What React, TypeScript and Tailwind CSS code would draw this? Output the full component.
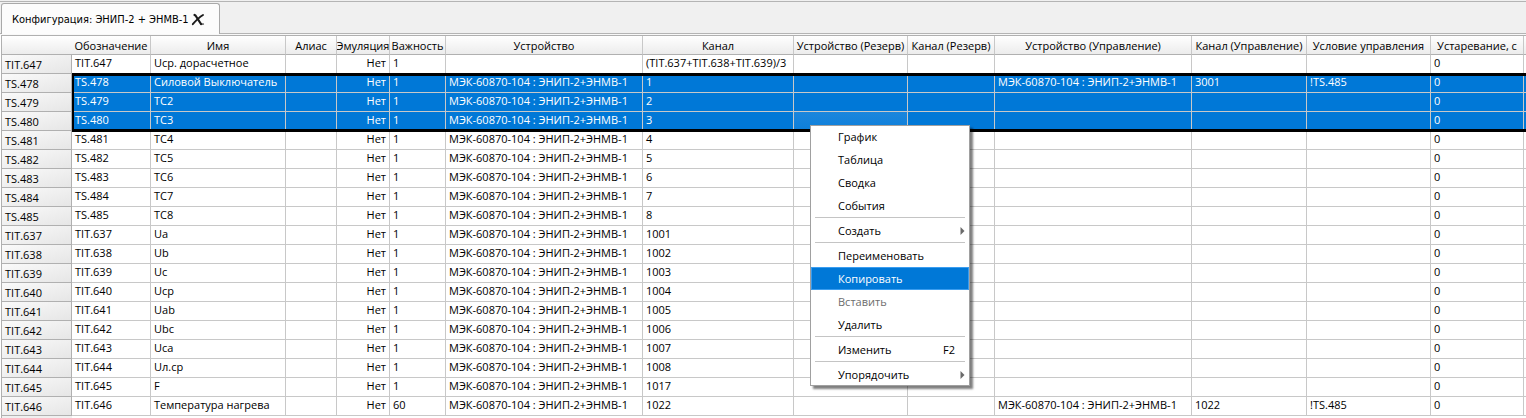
import React from "react";

const ROW = 19;
const SELECTED = { first: 1, count: 3 };
const CURRENT = { row: 3, column: 7 };

type Column = { title: string; width: string };

const columns: Column[] = [
  { title: "Обозначение", width: "w-[79px]" },
  { title: "Имя", width: "w-[135px]" },
  { title: "Алиас", width: "w-[51px]" },
  { title: "Эмуляция", width: "w-[53px]" },
  { title: "Важность", width: "w-[56px]" },
  { title: "Устройство", width: "w-[197px]" },
  { title: "Канал", width: "w-[151px]" },
  { title: "Устройство (Резерв)", width: "w-[114px]" },
  { title: "Канал (Резерв)", width: "w-[87px]" },
  { title: "Устройство (Управление)", width: "w-[197px]" },
  { title: "Канал (Управление)", width: "w-[115px]" },
  { title: "Условие управления", width: "w-[124px]" },
  { title: "Устаревание, с", width: "w-[93px]" },
];

const DEVICE = "МЭК-60870-104 : ЭНИП-2+ЭНМВ-1";

type Row = {
  id: string;
  name: string;
  channel: string;
  device?: string;
  priority?: string;
  controlDevice?: string;
  controlChannel?: string;
  condition?: string;
};

const rows: Row[] = [
  { id: "TIT.647", name: "Uср. дорасчетное", channel: "(TIT.637+TIT.638+TIT.639)/3", device: "" },
  { id: "TS.478", name: "Силовой Выключатель", channel: "1", controlDevice: DEVICE, controlChannel: "3001", condition: "!TS.485" },
  { id: "TS.479", name: "ТС2", channel: "2" },
  { id: "TS.480", name: "ТС3", channel: "3" },
  { id: "TS.481", name: "ТС4", channel: "4" },
  { id: "TS.482", name: "ТС5", channel: "5" },
  { id: "TS.483", name: "ТС6", channel: "6" },
  { id: "TS.484", name: "ТС7", channel: "7" },
  { id: "TS.485", name: "ТС8", channel: "8" },
  { id: "TIT.637", name: "Ua", channel: "1001" },
  { id: "TIT.638", name: "Ub", channel: "1002" },
  { id: "TIT.639", name: "Uc", channel: "1003" },
  { id: "TIT.640", name: "Uср", channel: "1004" },
  { id: "TIT.641", name: "Uab", channel: "1005" },
  { id: "TIT.642", name: "Ubc", channel: "1006" },
  { id: "TIT.643", name: "Uca", channel: "1007" },
  { id: "TIT.644", name: "Uл.ср", channel: "1008" },
  { id: "TIT.645", name: "F", channel: "1017" },
  { id: "TIT.646", name: "Температура нагрева", channel: "1022", priority: "60", controlDevice: DEVICE, controlChannel: "1022", condition: "!TS.485" },
];

function cellsOf(row: Row): string[] {
  return [
    row.id,
    row.name,
    "",
    "Нет",
    row.priority ?? "1",
    row.device ?? DEVICE,
    row.channel,
    "",
    "",
    row.controlDevice ?? "",
    row.controlChannel ?? "",
    row.condition ?? "",
    "0",
  ];
}

type MenuEntry = {
  label: string;
  submenu?: boolean;
  shortcut?: string;
  active?: boolean;
  disabled?: boolean;
};

const menuGroups: MenuEntry[][] = [
  [{ label: "График" }, { label: "Таблица" }, { label: "Сводка" }, { label: "События" }],
  [{ label: "Создать", submenu: true }],
  [
    { label: "Переименовать" },
    { label: "Копировать", active: true },
    { label: "Вставить", disabled: true },
    { label: "Удалить" },
  ],
  [{ label: "Изменить", shortcut: "F2" }],
  [{ label: "Упорядочить", submenu: true }],
];

function TabBar() {
  return (
    <div className="flex h-8 items-end border-b border-[#b4b4b4] bg-[#f0f0f0] pl-px">
      <div
        role="tab"
        aria-selected="true"
        className="-mb-px flex h-[31px] items-center rounded-t-[3px] border border-b-0 border-[#a9a9a9] bg-[#fcfcfc] pt-0.5 pr-3.5 pl-2.5 font-['DejaVu_Sans_Condensed','DejaVu_Sans',sans-serif] text-[11px] leading-4 text-black"
      >
        <span className="whitespace-nowrap">Конфигурация: ЭНИП-2 + ЭНМВ-1</span>
        <button type="button" aria-label="Закрыть вкладку" className="ml-0.5 size-3.5">
          <CloseIcon />
        </button>
      </div>
    </div>
  );
}

function CloseIcon() {
  return (
    <svg viewBox="0 0 14 14" className="size-3.5" fill="none" stroke="#1b1b1b" strokeLinecap="round">
      <path d="M3.500 2 4.500 2.500 10 11" strokeWidth="2.200" strokeLinejoin="round" />
      <path d="M12 2C8.500 4 5 7.500 1.800 11.200" strokeWidth="1.900" />
      <path d="M10 11.200 12.500 11" strokeWidth="1.200" />
    </svg>
  );
}

function DataTable() {
  const isSelected = (i: number) => i >= SELECTED.first && i < SELECTED.first + SELECTED.count;
  return (
    <div className="relative ml-px border-t border-l border-[#b0b0b0]">
      <table className="w-full table-fixed border-separate border-spacing-0">
        <colgroup>
          <col className="w-[70px]" />
          {columns.map((c) => (
            <col key={c.title} className={c.width} />
          ))}
          <col />
        </colgroup>
        <thead>
          <tr className="h-[19px]">
            <th className="border-b border-[#b0b0b0] bg-linear-to-b from-white to-[#ececec] p-0" />
            {columns.map((c) => (
              <th
                key={c.title}
                scope="col"
                className="overflow-hidden border-r border-b border-r-[#c8c8c8] border-b-[#b0b0b0] bg-linear-to-b from-white to-[#ececec] p-0 font-normal whitespace-nowrap"
              >
                <div className="flex h-[18px] items-center justify-center pt-0.5 leading-4">{c.title}</div>
              </th>
            ))}
            <th className="border-b border-[#b0b0b0] bg-linear-to-b from-white to-[#ececec] p-0" />
          </tr>
        </thead>
        <tbody>
          {rows.map((row, i) => {
            const tone = isSelected(i) ? "bg-[#0078d7] text-white" : "bg-white text-black";
            return (
              <tr key={row.id} className={`h-[19px] ${tone}`}>
                <th
                  scope="row"
                  className="overflow-hidden border-r border-b border-[#b0b0b0] bg-linear-to-br from-[#fafafa] to-[#e6e6e6] p-0 pl-[3px] text-left font-normal whitespace-nowrap text-black"
                >
                  <div className="h-[18px] pt-0.5 leading-4">{row.id}</div>
                </th>
                {cellsOf(row).map((value, k) => (
                  <td
                    key={columns[k].title}
                    className={`overflow-hidden border-r border-b border-[#c8c8c8] p-0 px-[3px] whitespace-nowrap ${k === 3 ? "text-right" : ""} ${i === CURRENT.row && k === CURRENT.column ? "bg-linear-to-b from-[#1a86dd] to-[#0d7fda]" : ""}`}
                  >
                    <div className="h-[18px] leading-4">{value}</div>
                  </td>
                ))}
                <td className="border-b border-[#c8c8c8] p-0" />
              </tr>
            );
          })}
        </tbody>
      </table>
      <div
        className="pointer-events-none absolute right-0 left-[70px] border-y-3 border-l-2 border-black"
        style={{ top: ROW * (SELECTED.first + 1) - 1, height: ROW * SELECTED.count + 2 }}
      />
    </div>
  );
}

function ContextMenu() {
  return (
    <div
      role="menu"
      className="absolute top-[125px] left-[810px] w-40 bg-white px-px shadow-[3px_3px_2px_rgba(0,0,0,0.5)] outline-1 -outline-offset-1 outline-[#a0a0a0]"
    >
      {menuGroups.map((group, g) => (
        <div key={group[0].label}>
          {g > 0 && <div role="separator" className="mx-1 h-0.5 border-t border-[#c4c4c4]" />}
          {group.map((item) => (
            <MenuItem key={item.label} item={item} />
          ))}
        </div>
      ))}
    </div>
  );
}

function MenuItem({ item }: { item: MenuEntry }) {
  const tone = item.active
    ? "bg-[#0078d7] text-white outline-1 -outline-offset-1 outline-[#3a9df0]"
    : item.disabled
      ? "text-[#6d6d6d]"
      : "text-black";
  return (
    <button
      type="button"
      role="menuitem"
      disabled={item.disabled}
      className={`flex h-[23px] w-full items-center pr-1 pl-[27px] text-left leading-4 ${tone}`}
    >
      <span className="flex-1">{item.label}</span>
      {item.shortcut && <span className="pr-2.5">{item.shortcut}</span>}
      {item.submenu && (
        <svg viewBox="0 0 5 8" className="h-2 w-[5px]" fill="#6a6a6a">
          <path d="M0.500 0 4.500 4 0.500 8Z" />
        </svg>
      )}
    </button>
  );
}

export default function App() {
  return (
    <main className="relative flex min-h-screen flex-col overflow-hidden bg-white font-['Open_Sans','Noto_Sans',sans-serif] text-[11px] text-black">
      <div className="h-px bg-[#f0f0f0]" />
      <div className="h-px bg-[#b4b4b4]" />
      <TabBar />
      <div className="h-px bg-[#f8f8f8]" />
      <DataTable />
      <div className="ml-px w-[71px] flex-1 border-l border-[#b0b0b0] bg-[#f0f0f0]" />
      <ContextMenu />
    </main>
  );
}
